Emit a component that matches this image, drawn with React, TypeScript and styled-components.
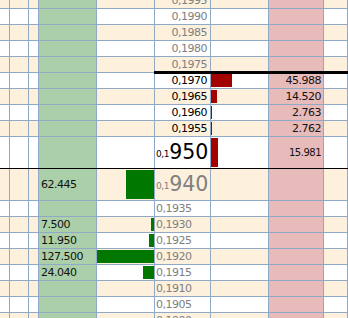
import React from 'react';
import styled, { createGlobalStyle } from 'styled-components';

const LINE = '#8fa9c7';
const CREAM = '#fdf0dc';
const BID_BG = '#abd0a9';
const ASK_BG = '#e8bbbb';
const MAX_VOL = 127500;
const BAR_SPAN = 57;

type Level = {
  price: string;
  bid?: number;
  ask?: number;
  big?: boolean;
  side: 'ask' | 'bid';
  spread?: boolean;
};

const levels: Level[] = [
  { price: '0,1995', side: 'ask' },
  { price: '0,1990', side: 'ask' },
  { price: '0,1985', side: 'ask' },
  { price: '0,1980', side: 'ask' },
  { price: '0,1975', side: 'ask' },
  { price: '0,1970', side: 'ask', ask: 45988, spread: true },
  { price: '0,1965', side: 'ask', ask: 14520 },
  { price: '0,1960', side: 'ask', ask: 2763 },
  { price: '0,1955', side: 'ask', ask: 2762 },
  { price: '0,1950', side: 'ask', ask: 15981, big: true },
  { price: '0,1940', side: 'bid', bid: 62445, big: true },
  { price: '0,1935', side: 'bid' },
  { price: '0,1930', side: 'bid', bid: 7500 },
  { price: '0,1925', side: 'bid', bid: 11950 },
  { price: '0,1920', side: 'bid', bid: 127500 },
  { price: '0,1915', side: 'bid', bid: 24040 },
  { price: '0,1910', side: 'bid' },
  { price: '0,1905', side: 'bid' },
  { price: '0,1900', side: 'bid' },
];

const fmt = (n: number) => n.toString().replace(/\B(?=(\d{3})+(?!\d))/g, '.');
const barWidth = (n: number) => Math.max(1, Math.round((n / MAX_VOL) * BAR_SPAN));

const GlobalStyle = createGlobalStyle`
  html, body {
    margin: 0;
    padding: 0;
    background: #fff;
    overflow: hidden;
  }
`;

const Ladder = styled.div`
  margin-top: -7px;
  width: 348px;
  font-family: 'DejaVu Sans', Verdana, sans-serif;
  font-size: 11px;
  letter-spacing: -0.5px;
  color: #111;
`;

const Row = styled.div<{ $big?: boolean; $even: boolean; $cut?: boolean; $spread?: boolean }>`
  position: relative;
  display: grid;
  grid-template-columns: 10px 19px 10px 58px 58px 56px 58px 55px 1fr;
  box-sizing: border-box;
  height: ${(p) => (p.$big ? 32 : 16)}px;
  line-height: ${(p) => (p.$big ? 31 : 15)}px;
  border-bottom: 1px solid ${(p) => (p.$cut ? '#000' : LINE)};
  background: ${(p) => (p.$even ? CREAM : '#fff')};

  ${(p) =>
    p.$spread &&
    `
    &::before {
      content: '';
      position: absolute;
      left: 154px;
      right: 0;
      top: -2px;
      height: 3px;
      background: #000;
      z-index: 1;
    }
  `}
`;

const Cell = styled.div`
  box-sizing: border-box;
  border-right: 1px solid ${LINE};
  overflow: hidden;
  white-space: nowrap;
`;

const BidVol = styled(Cell)`
  background: ${BID_BG};
  padding-left: 2px;
`;

const AskVol = styled(Cell)<{ $small?: boolean }>`
  background: ${ASK_BG};
  padding-right: 2px;
  text-align: right;
  font-size: ${(p) => (p.$small ? '10px' : 'inherit')};
`;

const BarCell = styled(Cell)<{ $align: 'left' | 'right' }>`
  display: flex;
  justify-content: ${(p) => (p.$align === 'right' ? 'flex-end' : 'flex-start')};
  padding: 1px 0;
`;

const Bar = styled.div<{ $side: 'ask' | 'bid' }>`
  height: 100%;
  background: ${(p) => (p.$side === 'ask' ? '#a30000' : '#007800')};
`;

const Price = styled(Cell)<{ $side: 'ask' | 'bid'; $active: boolean }>`
  color: ${(p) => (p.$active ? '#000' : '#808080')};
  text-align: ${(p) => (p.$side === 'ask' ? 'right' : 'left')};
  padding: ${(p) => (p.$side === 'ask' ? '0 3px 0 0' : '0 0 0 1px')};
`;

const BigPrice = styled(Cell)<{ $active: boolean }>`
  color: ${(p) => (p.$active ? '#000' : '#808080')};
  padding-left: 1px;
  letter-spacing: 0;
`;

const Prefix = styled.span`
  font-size: 9px;
  letter-spacing: -0.4px;
  vertical-align: 2px;
`;

const Tail = styled.span`
  font-size: 20.5px;
`;

const App = () => {
  return (
    <>
      <GlobalStyle />
      <Ladder>
        {levels.map((lv, i) => {
          const active = lv.side === 'ask' && lv.ask !== undefined;
          return (
            <Row
              key={lv.price}
              $even={i % 2 === 0}
              $big={lv.big}
              $cut={lv.big && lv.side === 'ask'}
              $spread={lv.spread}
            >
              <Cell />
              <Cell />
              <Cell />
              <BidVol>{lv.bid ? fmt(lv.bid) : ''}</BidVol>
              <BarCell $align="right">
                {lv.bid ? <Bar $side="bid" style={{ width: barWidth(lv.bid) }} /> : null}
              </BarCell>
              {lv.big ? (
                <BigPrice $active={lv.side === 'ask'}>
                  <Prefix>{lv.price.slice(0, 3)}</Prefix>
                  <Tail>{lv.price.slice(3)}</Tail>
                </BigPrice>
              ) : (
                <Price $side={lv.side} $active={active}>
                  {lv.price}
                </Price>
              )}
              <BarCell $align="left">
                {lv.ask ? <Bar $side="ask" style={{ width: barWidth(lv.ask) }} /> : null}
              </BarCell>
              <AskVol $small={lv.big}>{lv.ask ? fmt(lv.ask) : ''}</AskVol>
              <Cell />
            </Row>
          );
        })}
      </Ladder>
    </>
  );
};

export default App;
